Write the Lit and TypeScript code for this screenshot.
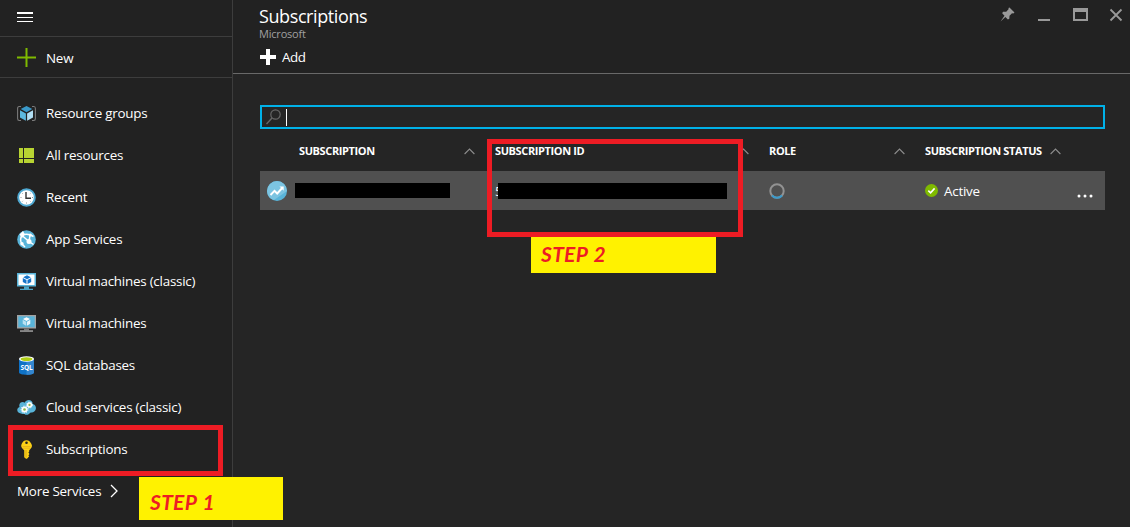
import { LitElement, html, svg, css } from "lit";
import { customElement } from "lit/decorators.js";

const icons: Record<string, unknown> = {
  groups: svg`<path d="M4 2.5H2.2Q.6 2.5.6 4.5v10q0 2 1.6 2H4M15 2.5h1.8q1.6 0 1.6 2v10q0 2-1.6 2H15" fill="none" stroke="#7a7a7a" stroke-width="1.1"/><path d="M9.500 2l5.800 3L9.500 8.300 3.700 5z" fill="#3a99c9"/><path d="M3 6.200l5.900 3.200v7.400L3 13.500z" fill="#5cb8de"/><path d="M16 6.200l-5.900 3.200v7.400l5.900-3.300z" fill="#b2dff3"/>`,
  all: svg`<path d="M2 2h4v10H2zM7 2h10v10H7zM2 13h4v4H2zM7 13h10v4H7z" fill="#b8d432"/>`,
  recent: svg`<circle cx="9.500" cy="9.500" r="8.300" fill="#fff" stroke="#4fa9d2" stroke-width="2"/><path d="M9 4v6.200h5" fill="none" stroke="#333" stroke-width="1.400"/><path d="M9.500 14.500v1M3.500 9.500h1M15 9.500h1M5.300 5.300l.6.600M13.500 5.300l-.6.600M5.300 13.500l.6-.6M13.500 13.500l-.6-.6" stroke="#888" stroke-width=".9"/>`,
  app: svg`<circle cx="9.500" cy="9.500" r="9.300" fill="#59b4d9"/><g fill="none" stroke="#fff" stroke-width="1.500"><path d="M5 5.500L12 11.500l4.500 3M5 5.500q5-3 11.500 1M5 5.500Q2.500 9 4.500 13.500L8 17M12 11.500l1-6"/></g><g fill="#fff"><path d="M2.500 4.500L6 1l2 3.500-3 3.500z"/><circle cx="5" cy="13.800" r="1.700"/><circle cx="12" cy="11.500" r="2.500"/><circle cx="13.300" cy="5" r="1.500"/></g>`,
  vmc: svg`<path d="M0 1h19v13.500H0z" fill="#59b4d9"/><path d="M1.500 2.500h16v10.500h-16z" fill="#fff"/><path d="M7 14.500h5v2.200h4V18H3v-1.300h4z" fill="#4aa3c7"/><path d="M10 3.300l3.800 1.900L10 7.300 6.200 5.200zM5.800 6l3.700 2v4L5.800 10zM14.200 6l-3.700 2v4l3.700-2z" fill="#1574c9"/>`,
  vm: svg`<path d="M0 1h19v13.500H0z" fill="#a2a2a2"/><path d="M1.300 2.300h16.400v10.900H1.300z" fill="#59b4d9"/><path d="M7 14.500h5v1.900H7z" fill="#777"/><path d="M3 16.300h13v1.500H3z" fill="#a0a0a0"/><path d="M9.500 3.300l3.500 1.800-3.500 2L6 5.100z" fill="#fff"/><path d="M5.700 5.800l3.400 1.900v4l-3.400-2z" fill="#b9e1f2"/><path d="M13.300 5.800L9.900 7.700v4l3.400-2z" fill="#e5f4fb"/>`,
  sql: svg`<path d="M2 3v13.500c0 3 15 3 15 0V3z" fill="#0f72c6"/><path d="M9.500 3v15.800c4 0 7.500-.8 7.500-2.300V3z" fill="#3386cf"/><ellipse cx="9.500" cy="3" rx="7.500" ry="2.700" fill="#fff"/><ellipse cx="9.500" cy="3.100" rx="6" ry="1.900" fill="#b0cf16"/><text x="9.500" y="14" text-anchor="middle" font-family="Open Sans, sans-serif" font-weight="700" font-size="6.500" letter-spacing="-.1" fill="#fff">SQL</text>`,
  cloud: svg`<path d="M4 15.500C-.5 15.500-.9 10 2.600 9 1 5 5.500 3 7.600 4.700 9.500.5 16 1.500 15.600 6c4.500 1 4.300 7 .4 8.200-1.500.6-2.500-.2-3.500 1.300-1.500 1.800-4 1.600-5 .4-1 .4-2 .2-3.500-.4z" fill="#59b4d9"/><g fill="#8fb848" stroke="#fff"><circle cx="7.500" cy="11.500" r="2.200" stroke-width="1.700"/><circle cx="12.500" cy="7" r="1.900" stroke-width="1.500"/></g><g fill="none" stroke="#fff" stroke-width="1" stroke-dasharray="1.200 1.200"><circle cx="7.500" cy="11.500" r="3.400"/><circle cx="12.500" cy="7" r="2.900"/></g>`,
  key: svg`<path fill-rule="evenodd" d="M9.500.2c2.400 0 3.300 1.200 4.500 3.100 1.600 2.400 1.300 4.400-1.800 6.900v1.300l-.8.900.8 1v1l-.8.800.8 1-2.200 2.600H9l-1.800-1.600v-7C4 7.700 3.600 5.700 5 3.300 6.200 1.400 7.100.2 9.500.2zM9.500 1.500a1.300 1.300 0 100 2.600 1.300 1.300 0 000-2.600z" fill="#fcd116"/><path d="M5.500 6.500h8M6 8.200h7" stroke="#e2ae1c" stroke-width=".8"/><path d="M9 10v7.500" stroke="#d8a31b" stroke-width=".9"/>`,
};

const items: [string, string][] = [
  ["groups", "Resource groups"],
  ["all", "All resources"],
  ["recent", "Recent"],
  ["app", "App Services"],
  ["vmc", "Virtual machines (classic)"],
  ["vm", "Virtual machines"],
  ["sql", "SQL databases"],
  ["cloud", "Cloud services (classic)"],
  ["key", "Subscriptions"],
];

const caret = html`<svg width="11" height="7" viewBox="0 0 11 7"><path d="M.6 6L5.500 1l4.900 5" fill="none" stroke="#8c8c8c" stroke-width="1.100"/></svg>`;

@customElement("app-root")
export class AppRoot extends LitElement {
  static styles = css`
    :host { display: flex; position: relative; width: 1130px; height: 527px; overflow: hidden; background: #252525; color: #fff; font: 13.4px/20px "Open Sans", "Noto Sans", sans-serif; letter-spacing: -.23px; white-space: nowrap; box-sizing: border-box; }
    * { box-sizing: border-box; }
    svg { display: block; flex: none; }
    nav { width: 233px; border-right: 1px solid #3d3d3d; background: #222; flex: none; }
    .burger { height: 37px; padding: 12px 0 0 17px; border-bottom: 1px solid #3d3d3d; }
    .new { height: 41px; border-bottom: 1px solid #3d3d3d; display: flex; align-items: center; padding: 1px 0 0 17px; gap: 10px; }
    .list { padding-top: 14px; }
    .item { height: 42px; display: flex; align-items: center; gap: 10px; padding-left: 17px; }
    .more { height: 42px; display: flex; align-items: center; gap: 9px; padding-left: 17px; }
    main { flex: 1; min-width: 0; display: flex; flex-direction: column; }
    header { height: 74px; background: #222; border-bottom: 1px solid #696969; padding: 4px 6px 0 26px; display: flex; justify-content: space-between; }
    h1 { margin: 0; font-size: 18px; line-height: 25px; font-weight: 400; letter-spacing: -.4px; }
    .org { font-size: 11px; line-height: 12px; color: #a0a0a0; margin-top: -1px; letter-spacing: -.2px; }
    .add { display: flex; align-items: center; gap: 5px; height: 20px; margin-top: 7px; letter-spacing: -.4px; }
    .search { margin: 31px 25px 0 27px; height: 24px; border: 2px solid #00b1e8; display: flex; align-items: center; padding-left: 4px; gap: 5px; }
    .cursor { width: 1px; height: 17px; background: #fff; }
    .grid { display: grid; grid-template-columns: 235px 274px 156px 180px; margin-left: 27px; width: 845px; align-items: center; }
    .heads { height: 42px; font-size: 11px; font-weight: 700; padding-top: 2px; letter-spacing: -.38px; }
    .head { display: flex; align-items: center; justify-content: space-between; padding-right: 20px; }
    .first { padding-left: 39px; }
    .status { justify-content: flex-start; gap: 8px; padding-right: 0; }
    .row { height: 39px; background: #505050; }
    .cell { display: flex; align-items: center; }
    .name { padding-left: 7px; gap: 8px; }
    .mask1 { width: 155px; height: 15px; background: #000; }
    .digit { width: 3px; }
    .mask2 { width: 229px; height: 16px; background: #000; margin-top: 1px; position: relative; }
    .active { gap: 6px; }
    .dots { margin-left: auto; margin-right: 12px; margin-top: 11px; }
    .mark { position: absolute; border: 5px solid #ed1c24; }
    .m1 { left: 8px; top: 425px; width: 215px; height: 51px; }
    .m2 { left: 487px; top: 139px; width: 256px; height: 98px; }
    .step { position: absolute; background: #fff200; color: #ed1c24; font: italic 900 21px/24px Lato, sans-serif; font-weight: 700; letter-spacing: .3px; word-spacing: 1px; }
    .s1 { left: 139px; top: 477px; width: 144px; height: 43px; padding: 13px 0 0 11px; }
    .s2 { left: 531px; top: 237px; width: 185px; height: 36px; padding: 5px 0 0 10px; }
  `;

  render() {
    return html`
      <nav>
        <div class="burger"><svg width="16" height="10" viewBox="0 0 16 10"><path d="M0 0h16v2H0zM0 5h16v1H0zM0 9h16v1H0z" fill="#fff"/></svg></div>
        <div class="new"><svg width="19" height="19" viewBox="0 0 19 19"><path d="M9.500 0v19M0 9.500h19" stroke="#7fba00" stroke-width="2"/></svg><span>New</span></div>
        <div class="list">
          ${items.map(([i, t]) => html`<div class="item"><svg width="19" height="19" viewBox="0 0 19 19">${icons[i]}</svg><span>${t}</span></div>`)}
        </div>
        <div class="more"><span>More Services</span><svg width="8" height="14" viewBox="0 0 8 14"><path d="M1 1l6 6-6 6" fill="none" stroke="#fff" stroke-width="1.300"/></svg></div>
      </nav>
      <main>
        <header>
          <div>
            <h1>Subscriptions</h1>
            <div class="org">Microsoft</div>
            <div class="add"><svg width="18" height="18" viewBox="0 0 18 18"><path d="M7 1h4v6h6v4h-6v6H7v-6H1V7h6z" fill="#fff"/></svg>Add</div>
          </div>
          <svg width="124" height="22" viewBox="0 0 124 22"><g fill="#999"><path d="M9.500 3.500l5 5-1.200 1-1.300-.3-2.500 2.600-.2 3-1.400.7-2.500-2.600L.500 17.500 4.500 11.800 2.200 9.200l.8-1.400 3.200-.1 2.500-2.600-.3-1z"/><path d="M38 15h12v2H38zM73 4h15v13H73zM75 8v7h11V8z" fill-rule="evenodd"/></g><path d="M110.500 5.500l11 11M121.500 5.500l-11 11" stroke="#999" stroke-width="1.800"/></svg>
        </header>
        <div class="search"><svg width="15" height="16" viewBox="0 0 15 16"><circle cx="9.500" cy="5.500" r="4.700" fill="none" stroke="#666" stroke-width="1.200"/><path d="M6 9L.500 15" stroke="#666" stroke-width="1.400"/></svg><div class="cursor"></div></div>
        <div class="grid heads">
          <div class="head first"><span>SUBSCRIPTION</span>${caret}</div>
          <div class="head"><span>SUBSCRIPTION ID</span>${caret}</div>
          <div class="head"><span>ROLE</span>${caret}</div>
          <div class="head status"><span>SUBSCRIPTION STATUS</span>${caret}</div>
        </div>
        <div class="grid row">
          <div class="cell name"><svg width="20" height="20" viewBox="0 0 20 20"><circle cx="10" cy="10" r="10" fill="#59b4d9"/><path d="M0 10a10 10 0 0120 0L7 19A10 10 0 010 10z" fill="#7cc4e1"/><path d="M3.500 14l4-4.200 2.700 2.700 5-5.500" fill="none" stroke="#fff" stroke-width="1.900"/><path d="M12.500 5.500h4.200v4.200z" fill="#fff"/></svg><div class="mask1"></div></div>
          <div class="cell"><span class="digit">5</span><div class="mask2"></div></div>
          <div class="cell"><svg width="16" height="16" viewBox="0 0 16 16"><circle cx="8" cy="8" r="6.700" fill="none" stroke="#929292" stroke-width="2"/><path d="M3 12.500a6.700 6.700 0 0010 0" fill="none" stroke="#3b9bcc" stroke-width="2"/></svg></div>
          <div class="cell active"><svg width="13" height="13" viewBox="0 0 13 13"><circle cx="6.500" cy="6.500" r="6.500" fill="#7fba00"/><path d="M3.300 6.600l2.300 2.200 4-4.400" fill="none" stroke="#fff" stroke-width="1.600"/></svg><span>Active</span><svg class="dots" width="16" height="4" viewBox="0 0 16 4"><g fill="#fff"><circle cx="2" cy="2" r="1.500"/><circle cx="8" cy="2" r="1.500"/><circle cx="14" cy="2" r="1.500"/></g></svg></div>
        </div>
      </main>
      <div class="mark m1"></div>
      <div class="mark m2"></div>
      <div class="step s1">STEP 1</div>
      <div class="step s2">STEP 2</div>
    `;
  }
}
